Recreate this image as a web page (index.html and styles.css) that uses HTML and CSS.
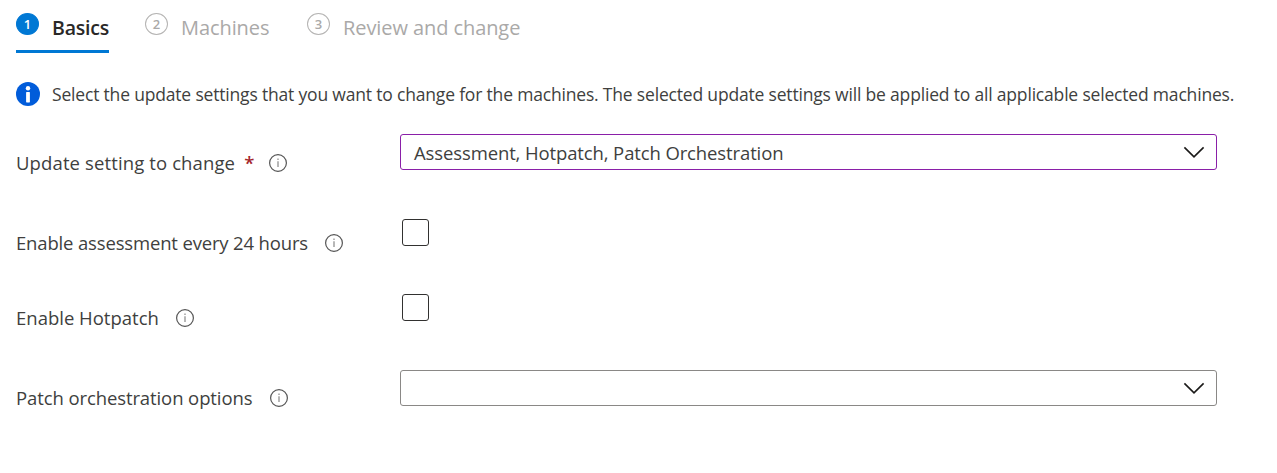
FILE: index.html
```html
<!DOCTYPE html>
<html lang="en">
<head>
<meta charset="utf-8">
<title>Change update settings</title>
<link rel="stylesheet" href="styles.css">
</head>
<body>
<svg class="defs" aria-hidden="true">
  <symbol id="info" viewBox="0 0 20 20">
    <circle cx="10" cy="10" r="8.4" fill="none" stroke="#555" stroke-width="1.2"/>
    <path d="M10 8.2V14M10 5.6V7" stroke="#888" stroke-width="1.2" fill="none"/>
  </symbol>
  <symbol id="chevron" viewBox="0 0 22 14">
    <path d="M1.4 2.4L11 11.9L20.6 2.4" fill="none" stroke="#1b1a19" stroke-width="1.6"/>
  </symbol>
</svg>
<nav class="tabs">
  <div class="tab active"><span class="step">1</span><span class="name">Basics</span></div>
  <div class="tab"><span class="step">2</span><span class="name">Machines</span></div>
  <div class="tab"><span class="step">3</span><span class="name">Review and change</span></div>
</nav>
<div class="notice">
  <svg class="notice-icon" viewBox="0 0 24 24"><circle cx="12" cy="12" r="12" fill="#015cda"/><circle cx="12" cy="6.2" r="2.2" fill="#fff"/><rect x="10.1" y="10" width="3.8" height="10.4" rx=".6" fill="#fff"/></svg>
  <span class="notice-text">Select the update settings that you want to change for the machines. The selected update settings will be applied to all applicable selected machines.</span>
</div>
<form class="form">
  <div class="row row-setting">
    <div class="label"><span class="label-text">Update setting to change</span><span class="required">*</span><svg class="info"><use href="#info"/></svg></div>
    <div class="select focused"><span class="value">Assessment, Hotpatch, Patch Orchestration</span><svg class="chevron"><use href="#chevron"/></svg></div>
  </div>
  <div class="row row-assess">
    <div class="label"><span class="label-text">Enable assessment every 24 hours</span><svg class="info"><use href="#info"/></svg></div>
    <div class="checkbox"></div>
  </div>
  <div class="row row-hotpatch">
    <div class="label"><span class="label-text">Enable Hotpatch</span><svg class="info"><use href="#info"/></svg></div>
    <div class="checkbox"></div>
  </div>
  <div class="row row-options">
    <div class="label"><span class="label-text">Patch orchestration options</span><svg class="info"><use href="#info"/></svg></div>
    <div class="select"><span class="value"></span><svg class="chevron"><use href="#chevron"/></svg></div>
  </div>
</form>
</body>
</html>
```
FILE: styles.css
```css
* { box-sizing: border-box; }
body {
  margin: 0;
  padding: 0 16px;
  background: #fff;
  color: #403f3e;
  font-family: "Open Sans", "Noto Sans", sans-serif;
  font-size: 18.5px;
  line-height: 26px;
}
.defs { position: absolute; width: 0; height: 0; }
svg { display: block; flex: none; }
.tabs { display: flex; gap: 36px; height: 53px; padding-top: 12px; }
.tab { display: flex; height: 41px; color: #aaa9a8; }
.step {
  width: 23px; height: 22px; margin: 1px 13px 0 0;
  border: 1px solid #b5b4b3; border-radius: 50%;
  font-size: 13px; font-weight: 600; line-height: 20px; text-align: center;
}
.name { padding-top: 3px; font-size: 20px; letter-spacing: -.08px; white-space: nowrap; }
.tab + .tab .name { min-width: 90px; }
.active { width: 93px; border-bottom: 3px solid #0078d4; color: #292827; }
.active .name { font-weight: 600; font-size: 19.5px; letter-spacing: -.22px; }
.active .step { border-color: #0078d4; background: #0078d4; color: #fff; }
.notice { display: flex; align-items: center; gap: 12px; margin-top: 29px; height: 24px; }
.notice-icon { width: 24px; height: 24px; }
.notice-text { font-size: 17.5px; letter-spacing: -.182px; white-space: nowrap; }
.form { display: flex; flex-direction: column; }
.row { display: grid; grid-template-columns: 384px 817px; align-items: start; }
.row-setting { margin-top: 28px; height: 85px; }
.row-assess { height: 75px; }
.row-hotpatch { height: 76px; }
.row-options { height: 40px; }
.label { display: flex; align-items: center; margin-top: 16px; white-space: nowrap; }
.row-setting .label-text { letter-spacing: .12px; }
.row-assess .label-text { letter-spacing: -.16px; }
.row-options .label-text { letter-spacing: -.1px; }
.row-assess .label, .row-hotpatch .label { margin-top: 11px; }
.row-options .label { margin-top: 15px; }
.required { width: 10px; color: #a4262c; margin-left: 9px; font-weight: 600; }
.info { width: 20px; height: 20px; margin-left: 16px; }
.row-setting .info { margin-left: 14px; }
.row-options .info { margin-left: 17px; }
.select {
  display: flex; align-items: center; justify-content: space-between;
  height: 36px; padding: 0 11px 0 13px;
  border: 1px solid #8a8886; border-radius: 3px;
}
.focused { border-color: #8a1fa8; }
.chevron { width: 22px; height: 14px; }
.value { padding-top: 1px; letter-spacing: -.12px; white-space: nowrap; }
.checkbox { width: 27px; height: 27px; margin-left: 2px; border: 1px solid #323130; border-radius: 3px; }
```
